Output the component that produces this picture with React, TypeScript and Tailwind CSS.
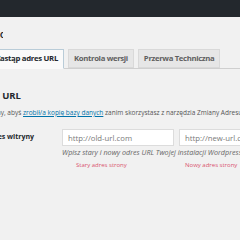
import React from "react";

const tabs = [
  { label: "Zastąp adres URL", active: true },
  { label: "Kontrola wersji", active: false },
  { label: "Przerwa Techniczna", active: false },
];

// the screenshot is a crop: everything sits 100px further left than the page origin
export default function App() {
  return (
    <div
      className="w-[240px] h-[240px] overflow-hidden bg-[#f1f1f1] text-[#444]"
      style={{ fontFamily: '"Open Sans", "Noto Sans", sans-serif' }}
    >
      {/* admin bar */}
      <div className="h-[17px] bg-[#23282d]" />

      <div className="-ml-[100px] w-[340px]">
        <h1 className="mt-[10px] w-[103px] h-[14px] text-right text-[11px] leading-[14px] font-semibold text-[#23282d] whitespace-nowrap overflow-hidden">
          Ustawienia Migration
        </h1>

        {/* tabs */}
        <div className="mt-[8px] flex gap-[4px] border-b border-[#cfcfcf] h-[20px]">
          {tabs.map((t, i) => (
            <div
              key={t.label}
              className={
                (i === 0 ? "w-[164px] justify-end pr-[5px] " : "px-[5px] ") +
                (t.active
                  ? "shrink-0 whitespace-nowrap h-[20px] flex items-center border border-[#b9ccd8] border-b-[#fafafa] bg-[#fafafa] text-[7.75px] tracking-[-0.3px] font-bold text-[#23282d]"
                  : "shrink-0 whitespace-nowrap h-[19px] flex items-center border border-[#d9d9d9] bg-[#e6e6e6] text-[7.75px] tracking-[-0.35px] font-bold text-[#5f5f5f]")
              }
            >
              {t.label}
            </div>
          ))}
        </div>

        <h2 className="mt-[20px] w-[121px] h-[14px] text-right text-[9.5px] leading-[14px] font-bold text-[#23282d] whitespace-nowrap">
          Zamiana adresu URL
        </h2>

        <p className="mt-[4px] flex h-[12px] text-[6.5px] leading-[12px] whitespace-nowrap text-[#555]">
          <span className="w-[123px] text-right shrink-0">Zalecamy, abyś&nbsp;</span>
          <span className="text-[#0073aa] underline">zrobił/a kopię bazy danych</span>
          <span>&nbsp;zanim skorzystasz z narzędzia Zmiany Adresu URL.</span>
        </p>

        <div className="mt-[10px] flex">
          <div className="w-[162px] shrink-0 h-[17px] flex items-center">
            <span className="w-[134px] text-right text-[7px] font-bold text-[#23282d] whitespace-nowrap">
              Adres witryny
            </span>
          </div>
          <div className="flex flex-col">
            <div className="flex gap-[5px]">
              <input
                readOnly
                placeholder="http://old-url.com"
                className="w-[112px] h-[17px] px-[5px] bg-white border border-[#dcdcdc] text-[7.75px] placeholder:text-[#7a7a7a] outline-none"
              />
              <input
                readOnly
                placeholder="http://new-url.com"
                className="w-[112px] h-[17px] px-[5px] bg-white border border-[#dcdcdc] text-[7.75px] placeholder:text-[#7a7a7a] outline-none"
              />
            </div>
            <p className="mt-[1px] h-[11px] leading-[11px] text-[7.2px] italic text-[#666] whitespace-nowrap">
              Wpisz stary i nowy odres URL Twojej instalacji Wordpress'a
            </p>
            <div className="flex mt-[3px] h-[9px] leading-[9px] text-[6px] text-[#d9546f] whitespace-nowrap">
              <span className="ml-[14px] w-[109px]">Stary adres strony</span>
              <span>Nowy adres strony</span>
            </div>
          </div>
        </div>
      </div>
    </div>
  );
}
